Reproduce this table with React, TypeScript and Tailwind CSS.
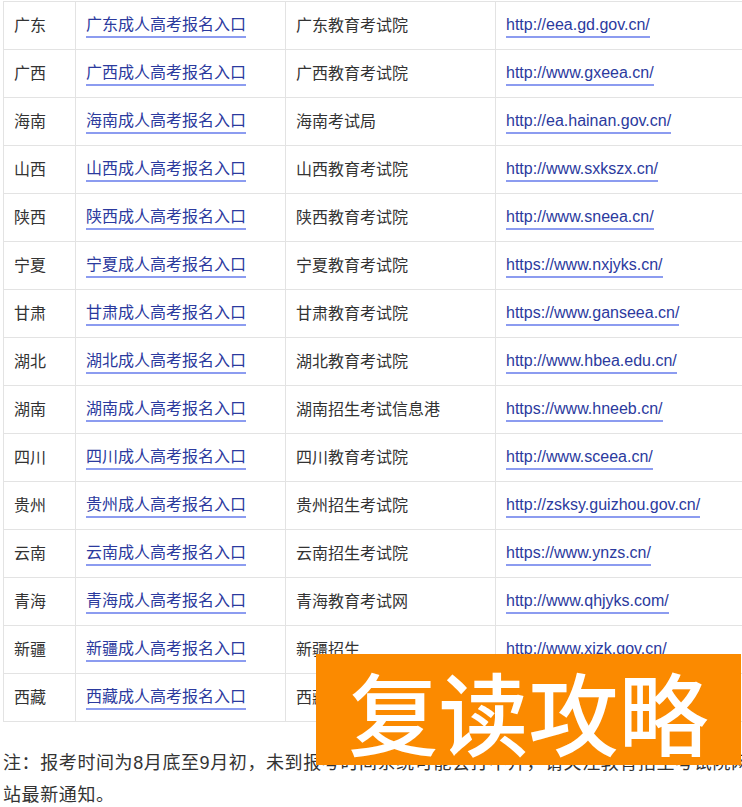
import React from "react";

type Row = {
  province: string;
  office: string;
  url: string;
};

const rows: Row[] = [
  { province: "广东", office: "广东教育考试院", url: "http://eea.gd.gov.cn/" },
  { province: "广西", office: "广西教育考试院", url: "http://www.gxeea.cn/" },
  { province: "海南", office: "海南考试局", url: "http://ea.hainan.gov.cn/" },
  { province: "山西", office: "山西教育考试院", url: "http://www.sxkszx.cn/" },
  { province: "陕西", office: "陕西教育考试院", url: "http://www.sneea.cn/" },
  { province: "宁夏", office: "宁夏教育考试院", url: "https://www.nxjyks.cn/" },
  { province: "甘肃", office: "甘肃教育考试院", url: "https://www.ganseea.cn/" },
  { province: "湖北", office: "湖北教育考试院", url: "http://www.hbea.edu.cn/" },
  { province: "湖南", office: "湖南招生考试信息港", url: "https://www.hneeb.cn/" },
  { province: "四川", office: "四川教育考试院", url: "http://www.sceea.cn/" },
  { province: "贵州", office: "贵州招生考试院", url: "http://zsksy.guizhou.gov.cn/" },
  { province: "云南", office: "云南招生考试院", url: "https://www.ynzs.cn/" },
  { province: "青海", office: "青海教育考试网", url: "http://www.qhjyks.com/" },
  { province: "新疆", office: "新疆招生", url: "http://www.xjzk.gov.cn/" },
  { province: "西藏", office: "西藏教育考试院", url: "http://zsks.edu.xizang.gov.cn/" },
];

const font = {
  fontFamily: '"Liberation Sans", "Noto Sans CJK SC", sans-serif',
};

function LinkText({ children }: { children: React.ReactNode }) {
  return (
    <span className="inline-block leading-[22px] text-[#2b3a9e] border-b-2 border-[#8c9cf0]">
      {children}
    </span>
  );
}

export default function App() {
  return (
    <div className="relative w-[742px] h-[807px] overflow-hidden bg-white text-[#333]" style={font}>
      <div className="w-[800px] pl-[3px] pt-[1px]">
        {/* TABLE */}
        <table className="w-[797px] border-collapse text-[16px] table-fixed">
          <colgroup>
            <col className="w-[72px]" />
            <col className="w-[210px]" />
            <col className="w-[210px]" />
            <col />
          </colgroup>
          <tbody>
            {rows.map((row) => (
              <tr key={row.province} className="h-[48px]">
                <td className="border border-[#e3e3e3] pl-[10px] align-middle whitespace-nowrap">
                  {row.province}
                </td>
                <td className="border border-[#e3e3e3] pl-[10px] align-middle whitespace-nowrap">
                  <LinkText>{row.province}成人高考报名入口</LinkText>
                </td>
                <td className="border border-[#e3e3e3] pl-[10px] align-middle whitespace-nowrap">
                  {row.office}
                </td>
                <td className="border border-[#e3e3e3] pl-[10px] align-middle whitespace-nowrap">
                  <LinkText>{row.url}</LinkText>
                </td>
              </tr>
            ))}
          </tbody>
        </table>

        {/* NOTE */}
        <p className="mt-[25px] w-[755px] text-[18px] leading-[32px] tracking-[0.6px]">
          注：报考时间为8月底至9月初，未到报考时间系统可能会打不开，请关注教育招生考试院网站最新通知。
        </p>
      </div>

      {/* BADGE */}
      <div className="absolute left-[316px] top-[654px] w-[425px] h-[111px] bg-[#fb8a00] flex items-center justify-center">
        <span
          className="text-white text-[90px] leading-none font-medium"
          style={{ fontFamily: '"Noto Sans CJK SC", sans-serif' }}
        >
          复读攻略
        </span>
      </div>
    </div>
  );
}
